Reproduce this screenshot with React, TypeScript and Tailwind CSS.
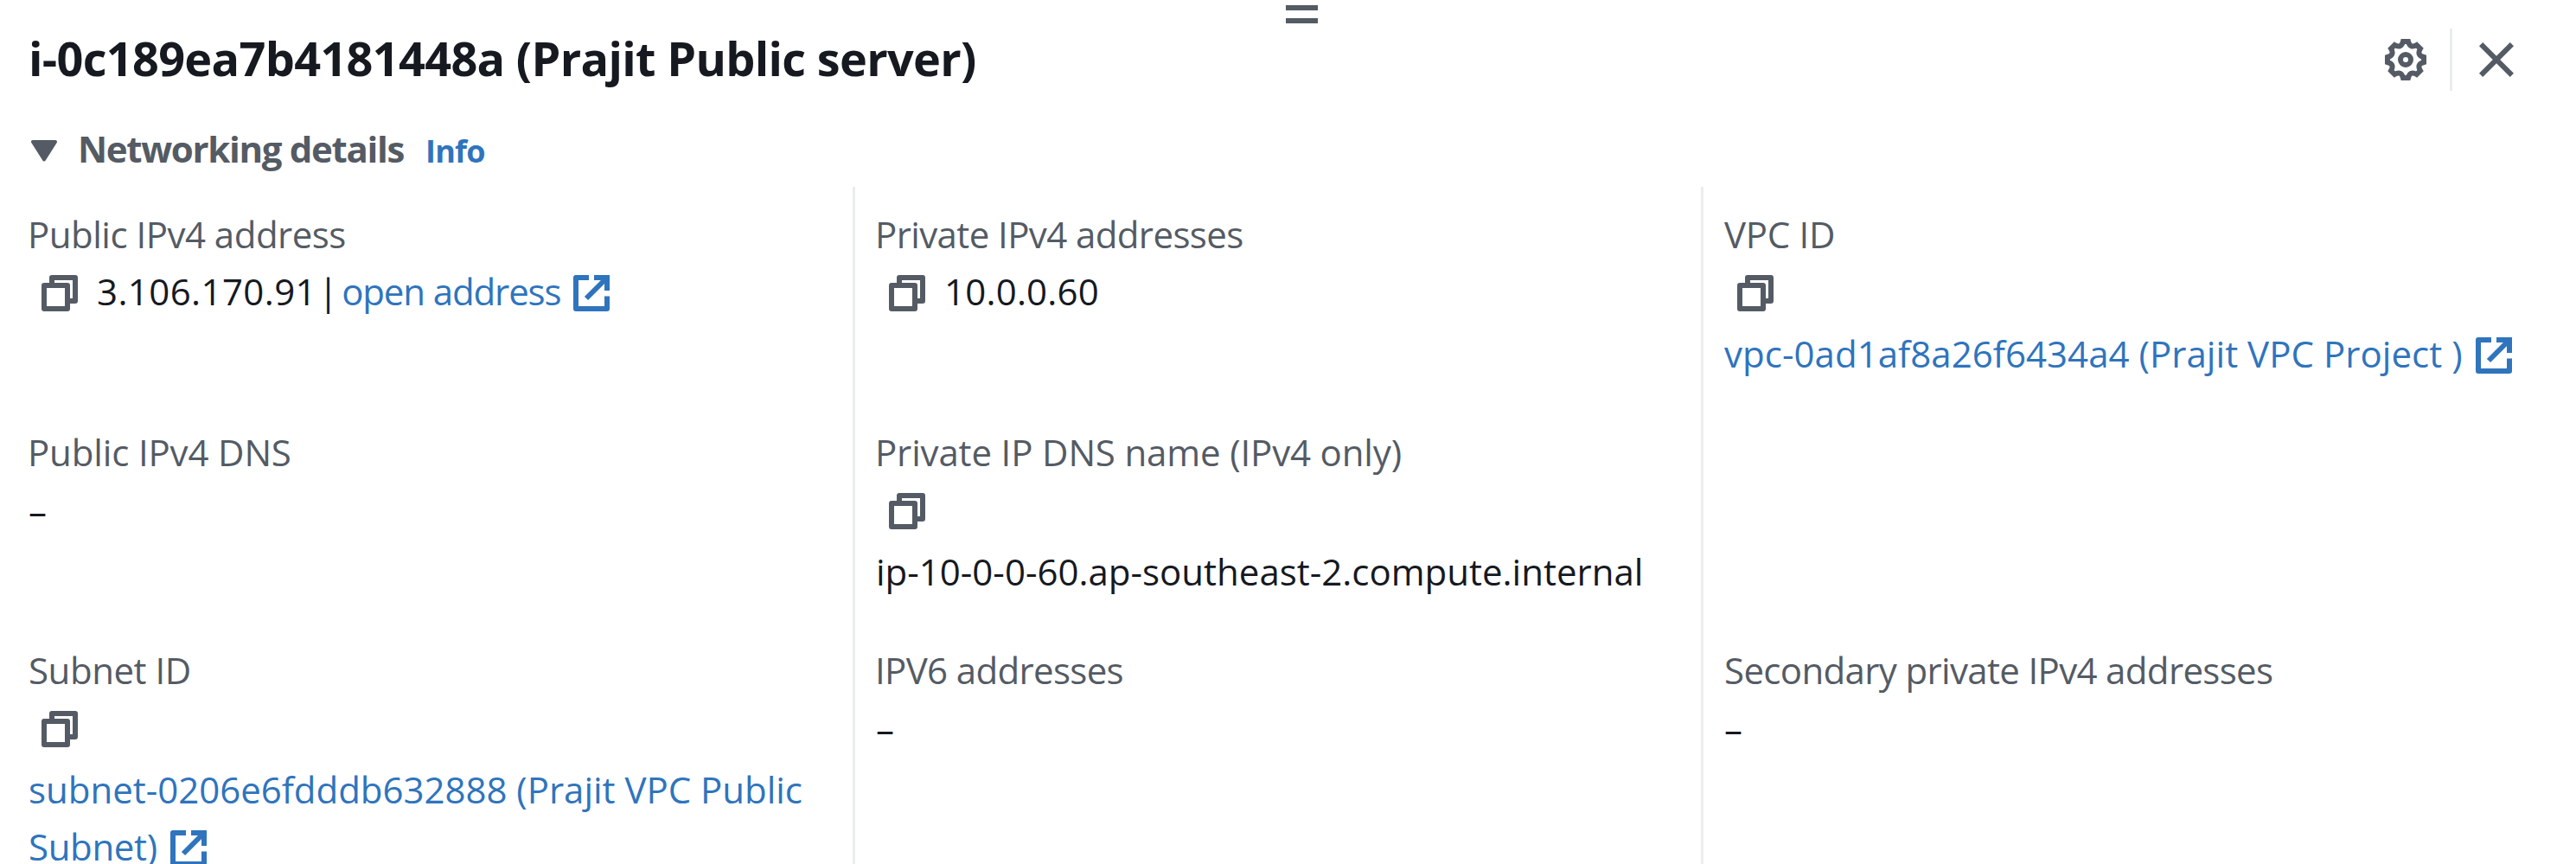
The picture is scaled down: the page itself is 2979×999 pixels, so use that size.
import React from 'react';

const CopyIcon = () => (
  <svg className="mt-[14px] mr-[22px] ml-[15px] size-[42px] shrink-0 self-start" viewBox="0 0 42 42" fill="none" stroke="#545b64" strokeWidth="6" strokeLinejoin="round">
    <path d="M3 12H30V39H3z" />
    <path d="M12 12V3H39V30H30" />
  </svg>
);

const ExternalIcon = () => (
  <svg className="mt-[14px] ml-[15px] size-[42px] shrink-0 self-start" viewBox="0 0 42 42" fill="none" stroke="#2f74bd" strokeWidth="6">
    <path d="M18 3H3V39H39V24.6" strokeLinejoin="round" />
    <path d="M24 3H39V18" />
    <path d="M39 3L15 27" />
  </svg>
);

const rotate = (x: number, y: number, deg: number) => {
  const a = (deg * Math.PI) / 180;
  return `${(x * Math.cos(a) - y * Math.sin(a)).toFixed(2)} ${(x * Math.sin(a) + y * Math.cos(a)).toFixed(2)}`;
};

const gearPath =
  [0, 45, 90, 135, 180, 225, 270, 315]
    .map((d) => `${d === 0 ? 'M' : 'L'}${rotate(-3, -21, d)}L${rotate(3, -21, d)}Q${rotate(0, -13.5, d + 22.5)} ${rotate(-3, -21, d + 45)}`)
    .join('') + 'Z';

const GearIcon = () => (
  <svg className="size-12" viewBox="-24 -24 48 48" fill="none" stroke="#545b64" strokeWidth="6">
    <path d={gearPath} />
    <circle r="6" />
  </svg>
);

const CloseIcon = () => (
  <svg className="size-10" viewBox="0 0 40 40" fill="none" stroke="#545b64" strokeWidth="6">
    <path d="M2.1 2.1L37.9 37.9M37.9 2.1L2.1 37.9" />
  </svg>
);

const Line = ({ children }: { children: React.ReactNode }) => (
  <div className="flex h-[66px] whitespace-nowrap">{children}</div>
);

const CopyLine = () => (
  <div className="flex h-[72px]">
    <CopyIcon />
  </div>
);

const Dash = () => (
  <Line>
    <span className="leading-[69px] font-medium">–</span>
  </Line>
);

const Field = ({ label, tracking, children }: { label: string; tracking: string; children?: React.ReactNode }) => (
  <div className="h-[252px] shrink-0">
    <div className={`h-[66px] whitespace-nowrap text-[#545b64] ${tracking}`}>{label}</div>
    {children}
  </div>
);

export default function App() {
  return (
    <div className="flex h-[999px] w-[2979px] flex-col overflow-hidden bg-white font-['Open_Sans',sans-serif] text-[42px] leading-[66px] text-[#16191f]">
      <div className="flex h-[33px] flex-col items-center gap-[9px] pt-[6px] pl-[32px]">
        <div className="h-[6px] w-[37px] shrink-0 bg-[#545b64]" />
        <div className="h-[6px] w-[37px] shrink-0 bg-[#545b64]" />
      </div>
      <header className="flex h-[72px] items-center pr-[72px] pl-[33px]">
        <h1 className="mb-[4px] text-[54px] leading-[66px] font-bold tracking-[-0.68px] whitespace-nowrap">i-0c189ea7b4181448a (Prajit Public server)</h1>
        <div className="ml-auto flex items-center">
          <GearIcon />
          <div className="mr-[31px] ml-[27px] h-[72px] w-[3px] bg-[#eaeded]" />
          <CloseIcon />
        </div>
      </header>
      <div className="mt-[34px] flex h-[66px] shrink-0 pl-[36px] font-bold">
        <svg className="mt-[23px] h-[25px] w-[30px]" viewBox="0 0 30 25" fill="#545b64" stroke="#545b64" strokeWidth="4" strokeLinejoin="round">
          <path d="M2 2H28L15 22.5z" />
        </svg>
        <h2 className="ml-[24px] tracking-[-1.32px] text-[#545b64]">Networking details</h2>
        <a className="ml-[25px] text-[36px] leading-[72px] tracking-[-0.8px] text-[#2f74bd]">Info</a>
      </div>
      <main className="mt-[11px] flex h-[783px] shrink-0 overflow-hidden">
        <section className="w-[986px] pt-[22px] pl-[33px]">
          <Field label="Public IPv4 address" tracking="-ml-px tracking-[-0.5px]">
            <Line>
              <CopyIcon />
              <span className="tracking-[0.4px]">3.106.170.91</span>
              <span className="ml-[2px]">|</span>
              <a className="ml-[4px] tracking-[-1.12px] text-[#2f74bd]">open address</a>
              <ExternalIcon />
            </Line>
          </Field>
          <Field label="Public IPv4 DNS" tracking="-ml-px tracking-[-0.15px]">
            <Dash />
          </Field>
          <Field label="Subnet ID" tracking="tracking-[-0.45px]">
            <CopyLine />
            <Line>
              <a className="text-[#2f74bd] tracking-[-0.02px]">subnet-0206e6fdddb632888 (Prajit VPC Public</a>
            </Line>
            <Line>
              <a className="tracking-[-0.35px] text-[#2f74bd]">Subnet)</a>
              <ExternalIcon />
            </Line>
          </Field>
        </section>
        <section className="w-[981px] border-l-[3px] border-[#eaeded] pt-[22px] pl-[24px]">
          <Field label="Private IPv4 addresses" tracking="-ml-px tracking-[-0.6px]">
            <Line>
              <CopyIcon />
              <span className="tracking-[0.2px]">10.0.0.60</span>
            </Line>
          </Field>
          <Field label="Private IP DNS name (IPv4 only)" tracking="-ml-px tracking-[-0.15px]">
            <CopyLine />
            <Line>
              <span>ip-10-0-0-60.ap-southeast-2.compute.internal</span>
            </Line>
          </Field>
          <Field label="IPV6 addresses" tracking="-ml-px tracking-[-0.65px]">
            <Dash />
          </Field>
        </section>
        <section className="flex-1 border-l-[3px] border-[#eaeded] pt-[22px] pl-[24px]">
          <Field label="VPC ID" tracking="tracking-[-0.28px]">
            <CopyLine />
            <Line>
              <a className="tracking-[0.04px] text-[#2f74bd]">vpc-0ad1af8a26f6434a4 (Prajit VPC Project )</a>
              <ExternalIcon />
            </Line>
          </Field>
          <div className="h-[252px]" />
          <Field label="Secondary private IPv4 addresses" tracking="tracking-[-0.65px]">
            <Dash />
          </Field>
        </section>
      </main>
    </div>
  );
}
